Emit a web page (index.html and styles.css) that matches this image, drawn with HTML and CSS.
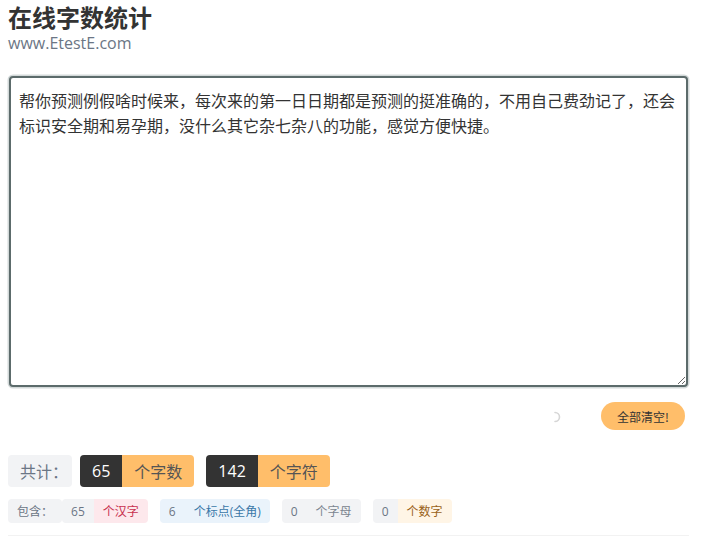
FILE: index.html
```html
<!DOCTYPE html>
<html lang="zh-CN">
<head>
    <meta charset="UTF-8">
    <title>在线字数统计</title>
    <link rel="stylesheet" href="styles.css">
</head>
<body>
    <div class="page">
        <!-- Header -->
        <div class="header">
            <h1 class="title">在线字数统计</h1>
            <div class="site">www.EtestE.com</div>
        </div>

        <!-- Input -->
        <textarea class="input" id="content">帮你预测例假啥时候来，每次来的第一日日期都是预测的挺准确的，不用自己费劲记了，还会标识安全期和易孕期，没什么其它杂七杂八的功能，感觉方便快捷。</textarea>

        <div class="actions">
            <svg class="spinner" width="12" height="12" viewBox="0 0 12 12">
                <path d="M6 1.5 A4.5 4.5 0 0 1 6 10.5" fill="none" stroke="#d6d6d6" stroke-width="1.6" stroke-linecap="round"/>
            </svg>
            <button class="clear-btn">全部清空!</button>
        </div>

        <!-- Totals -->
        <div class="totals">
            <span class="total-label">共计：</span>
            <span class="total">
                <span class="num">65</span><span class="unit">个字数</span>
            </span>
            <span class="total">
                <span class="num">142</span><span class="unit">个字符</span>
            </span>
        </div>

        <!-- Breakdown -->
        <div class="detail">
            <span class="detail-label">包含：</span>
            <span class="tag tag-red"><span class="tag-num">65</span><span class="tag-unit">个汉字</span></span>
            <span class="tag tag-blue"><span class="tag-num">6</span><span class="tag-unit">个标点(全角)</span></span>
            <span class="tag tag-grey"><span class="tag-num">0</span><span class="tag-unit">个字母</span></span>
            <span class="tag tag-orange"><span class="tag-num">0</span><span class="tag-unit">个数字</span></span>
        </div>

        <div class="next-box"></div>
    </div>
</body>
</html>
```

FILE: styles.css
```css
/* Reset */
* {
    margin: 0;
    padding: 0;
    box-sizing: border-box;
}

body {
    background-color: #fff;
    font-family: "Open Sans", "Noto Sans CJK SC", sans-serif;
    color: #333;
}

.page {
    width: 697px;
    padding: 5px 0 0 8px;
}

/* Header */
.title {
    font-family: "Noto Sans CJK SC", sans-serif;
    font-size: 24px;
    font-weight: bold;
    line-height: 24px;
    color: #333;
}

.site {
    font-size: 16px;
    line-height: 22px;
    color: #6b7685;
    margin-top: 3px;
}

/* Textarea */
.input {
    display: block;
    width: 679px;
    height: 311px;
    margin: 22px 0 0 1px;
    padding: 10px 8px;
    border: 2px solid #5c6b6b;
    border-radius: 4px;
    box-shadow: 0 0 0 1.5px #d3d9d9;
    outline: none;
    font-family: "Noto Sans CJK SC", sans-serif;
    font-size: 16px;
    line-height: 25px;
    color: #333;
    resize: vertical;
}

/* Actions row */
.actions {
    display: flex;
    justify-content: flex-end;
    align-items: center;
    gap: 40px;
    width: 677px;
    margin-top: 15px;
}

.spinner {
    display: block;
    margin-top: 2px;
}

.clear-btn {
    background-color: #ffbe6a;
    border: none;
    border-radius: 14px;
    height: 28px;
    padding: 0 16px;
    font-family: "Noto Sans CJK SC", sans-serif;
    font-size: 12px;
    color: #333;
    cursor: pointer;
}

/* Totals */
.totals {
    display: flex;
    gap: 8px;
    margin-top: 25px;
    height: 32px;
}

.total-label {
    display: flex;
    align-items: center;
    padding: 0 4px 0 12px;
    background-color: #f2f3f5;
    border-radius: 4px;
    font-size: 16px;
    color: #6b7685;
}

.total {
    display: flex;
    border-radius: 4px;
    overflow: hidden;
    font-size: 16px;
    margin-right: 4px;
}

.num {
    display: flex;
    align-items: center;
    padding: 0 12px;
    background-color: #333;
    color: #fff;
}

.unit {
    display: flex;
    align-items: center;
    padding: 0 12px;
    background-color: #ffbe6a;
    color: #555;
}

/* Breakdown */
.detail {
    display: flex;
    gap: 12px;
    margin-top: 12px;
    height: 24px;
    font-size: 12px;
}

.detail-label {
    display: flex;
    align-items: center;
    padding: 0 9px;
    background-color: #f2f3f5;
    border-radius: 4px;
    color: #6b7685;
    margin-right: -12px;
}

.tag {
    display: flex;
    border-radius: 4px;
    overflow: hidden;
}

.tag-num {
    display: flex;
    align-items: center;
    padding: 0 9px;
    background-color: #f2f3f5;
    color: #6b7685;
}

.tag-unit {
    display: flex;
    align-items: center;
    padding: 0 9px;
}

.tag-red .tag-unit {
    background-color: #fde8ec;
    color: #c8314f;
}

.tag-blue .tag-num,
.tag-blue .tag-unit {
    background-color: #eaf3fb;
    color: #3a78a8;
}

.tag-blue .tag-num {
    color: #6b7685;
}

.tag-grey .tag-unit {
    background-color: #f2f3f5;
    color: #7b8590;
}

.tag-orange .tag-unit {
    background-color: #fff5e6;
    color: #9a6218;
}

.next-box {
    width: 681px;
    height: 4px;
    margin-top: 12px;
    border-top: 2px solid #f2f2f2;
}
```
